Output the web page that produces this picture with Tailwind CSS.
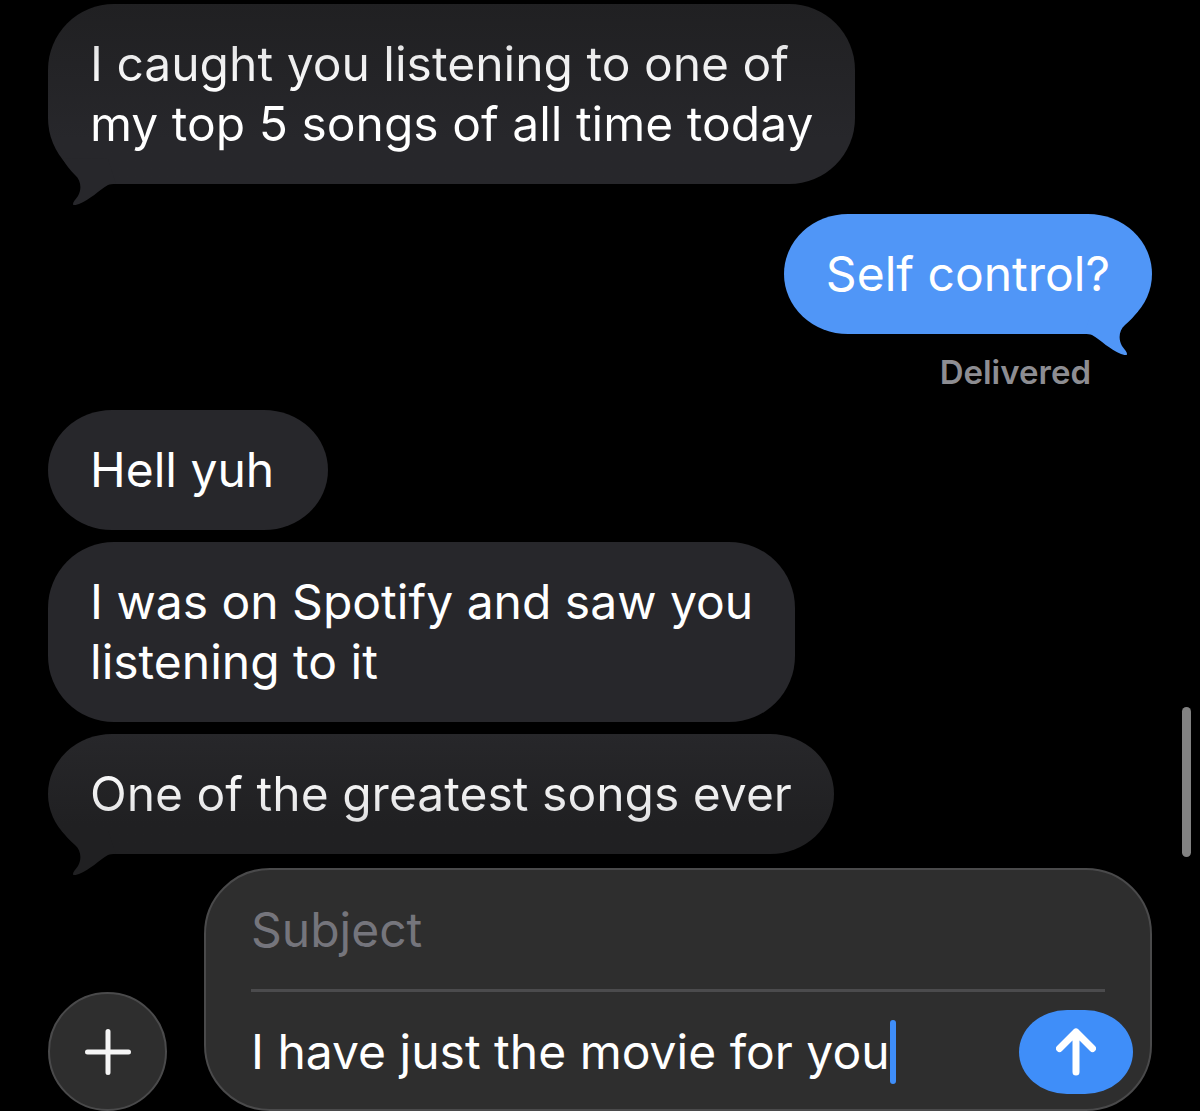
<!DOCTYPE html>
<html lang="en">
<head>
<meta charset="utf-8">
<meta name="viewport" content="width=device-width, initial-scale=1">
<title>Messages</title>
<script src="https://cdn.jsdelivr.net/npm/@tailwindcss/browser@4"></script>
</head>
<body class="min-h-screen bg-black font-['Inter',sans-serif] text-5xl leading-[60px] text-white">
<div class="relative flex min-h-screen flex-col overflow-hidden">
  <main class="flex flex-1 flex-col items-start px-12 pt-1">
    <!-- Received, with tail -->
    <div class="relative rounded-[66px] bg-linear-to-b from-[#202022] to-[#27272b] to-75% px-[42px] py-[30px]">
      <p class="bg-linear-to-b from-[#dededf] to-white to-50% bg-clip-text text-transparent">I caught you listening to one of<br>my top 5 songs of all time today</p>
      <svg class="absolute -bottom-[21px] left-0 h-[60px] w-[68px] text-[#27272b]" viewBox="0 0 68 60" fill="currentColor" aria-hidden="true"><path d="M14 13C18 20 22 25 27 30C33 35 34 44 30 51C27 55 25 57 25 59C25 61 28 60 31 59C43 54 50 46 60 40C62 39 64 39 68 39L60 14Z"/></svg>
    </div>

    <!-- Sent -->
    <div class="relative mt-[30px] self-end rounded-[64px/60px] bg-[#5096f7] px-[42px] py-[30px]">
      <p>Self control?</p>
      <svg class="absolute right-0 -bottom-[21px] h-[60px] w-[68px] -scale-x-100 text-[#5096f7]" viewBox="0 0 68 60" fill="currentColor" aria-hidden="true"><path d="M14 16C18 21 22 26 27 30C33 35 34 44 30 51C27 55 25 57 25 59C25 61 28 60 31 59C43 54 50 46 60 40C62 39 64 39 68 39L60 16Z"/></svg>
    </div>
    <p class="mt-[18px] mr-[61px] self-end text-[33px] leading-10 font-semibold text-[#8d8d92]">Delivered</p>

    <!-- Received group -->
    <div class="mt-[18px] flex flex-col items-start gap-3">
      <div class="min-w-[280px] rounded-[64px/60px] bg-[#27272b] px-[42px] py-[30px]"><p>Hell yuh</p></div>
      <div class="rounded-[66px] bg-[#27272b] px-[42px] py-[30px]"><p>I was on Spotify and saw you<br>listening to it</p></div>
      <div class="relative rounded-[64px/60px] bg-linear-to-b from-[#27272a] to-[#202022] to-75% px-[42px] py-[30px]">
        <p class="bg-linear-to-b from-white to-[#dededf] bg-clip-text text-transparent">One of the greatest songs ever</p>
        <svg class="absolute -bottom-[21px] left-0 h-[60px] w-[68px] text-[#202022]" viewBox="0 0 68 60" fill="currentColor" aria-hidden="true"><path d="M14 16C18 21 22 26 27 30C33 35 34 44 30 51C27 55 25 57 25 59C25 61 28 60 31 59C43 54 50 46 60 40C62 39 64 39 68 39L60 16Z"/></svg>
      </div>
    </div>
  </main>

  <footer class="flex items-end gap-[37px] px-12 pt-[14px]">
    <button type="button" aria-label="Add attachment" class="flex size-[119px] shrink-0 items-center justify-center rounded-full border-2 border-[#4a4a4b] bg-[#2e2e2e]">
      <svg class="size-12" viewBox="0 0 48 48" fill="none" stroke="#f5f5f5" stroke-width="5" stroke-linecap="round" aria-hidden="true"><path d="M24 3.500V44.500M3.500 24H44.500"/></svg>
    </button>
    <form class="min-w-0 flex-1 rounded-[66px] border-2 border-[#4a4a4b] bg-[#2e2e2e] pt-[30px] pb-[15px] pl-[45px]">
      <div class="mr-[45px] border-b-3 border-[#4b4b4d] pb-[29px]">
        <input type="text" aria-label="Subject" placeholder="Subject" class="block h-[60px] w-full bg-transparent outline-none placeholder:text-[#75757c]">
      </div>
      <div class="mt-[18px] mr-[17px] flex items-center justify-between">
        <div class="flex min-w-0 items-center">
          <input type="text" aria-label="Message" value="I have just the movie for you" class="field-sizing-content h-[60px] min-w-0 bg-transparent outline-none">
          <span class="h-16 w-[6px] shrink-0 rounded-full bg-[#3f8ef9]"></span>
        </div>
        <button type="submit" aria-label="Send" class="flex h-[84px] w-[114px] shrink-0 items-center justify-center rounded-[48px/42px] bg-[#3f8ef9]">
          <svg class="h-12 w-10" viewBox="0 0 40 48" fill="none" stroke="white" stroke-width="7" stroke-linecap="round" stroke-linejoin="round" aria-hidden="true"><path d="M20 4V44M3.500 20.500L20 4L36.500 20.500"/></svg>
        </button>
      </div>
    </form>
  </footer>

  <!-- Scroll indicator -->
  <div class="absolute right-[9px] bottom-[254px] h-[150px] w-[9px] rounded-full bg-[#828282]"></div>
</div>
</body>
</html>
